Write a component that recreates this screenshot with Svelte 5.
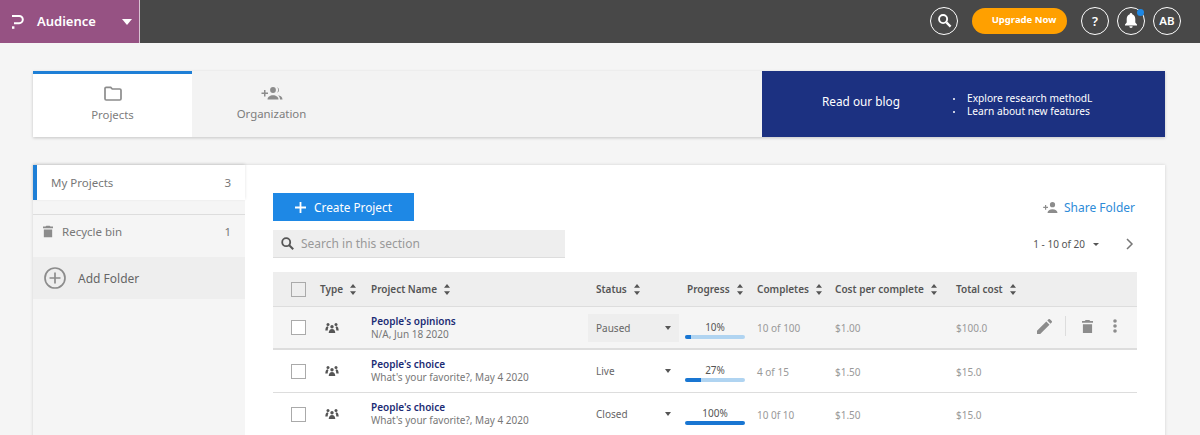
<script>
  const columns = [
    { label: 'Type' }, { label: 'Project Name' }, { label: 'Status' }, { label: 'Progress' },
    { label: 'Completes' }, { label: 'Cost per complete' }, { label: 'Total cost' }
  ];
  const rows = [
    { name: "People's opinions", sub: 'N/A, Jun 18 2020', status: 'Paused', pct: 10, completes: '10 of 100', cost: '$1.00', total: '$100.0', active: true },
    { name: "People's choice", sub: "What's your favorite?, May 4 2020", status: 'Live', pct: 27, completes: '4 of 15', cost: '$1.50', total: '$15.0' },
    { name: "People's choice", sub: "What's your favorite?, May 4 2020", status: 'Closed', pct: 100, completes: '10 0f 10', cost: '$1.50', total: '$15.0' }
  ];
</script>

{#snippet sort()}
  <svg class="sort" width="6" height="11" viewBox="0 0 6 11"><path d="M3 0 6 3.800H0zM0 7.200h6L3 11z" fill="#555"/></svg>
{/snippet}
{#snippet trash(w, h)}
  <svg width={w} height={h} viewBox="0 0 12 14"><path d="M4 0h4l1 1h3v2H0V1h3zM1 4.500h10V14H1z" fill="#8c8c8c"/></svg>
{/snippet}

<div class="page">
  <header class="top">
    <div class="brand">
      <svg width="12" height="14" viewBox="0 0 12 14"><path d="M0 1h7.200a3.500 3.500 0 0 1 0 7.200H2" fill="none" stroke="#fff" stroke-width="2"/><rect x="0" y="11.300" width="2.400" height="2.500" fill="#fff"/></svg>
      <span class="brand-name">Audience</span>
      <span class="caret"></span>
    </div>
    <div class="top-actions">
      <span class="circle search"><svg width="15" height="15" viewBox="0 0 16 16"><circle cx="6.500" cy="6.500" r="4.300" fill="none" stroke="#fff" stroke-width="2"/><path d="m10 10 4.500 4.500" stroke="#fff" stroke-width="2.400"/></svg></span>
      <span class="upgrade">Upgrade Now</span>
      <span class="circle">?</span>
      <span class="circle bell">
        <svg width="14" height="15" viewBox="0 0 14 15"><path d="M7 0a1.200 1.200 0 0 1 1.200 1.300C10.300 2 11.300 3.800 11.300 6v3.500L13 11.500V12.500H1V11.500l1.700-2V6C2.700 3.800 3.700 2 5.800 1.300A1.200 1.200 0 0 1 7 0zM5.300 13.300h3.400a1.700 1.700 0 0 1-3.400 0z" fill="#fff"/></svg>
        <i class="dot"></i>
      </span>
      <span class="circle ab">AB</span>
    </div>
  </header>

  <section class="tabs">
    <div class="tab selected">
      <svg width="18" height="15" viewBox="0 0 18 15"><path d="M1 2.500a1.200 1.200 0 0 1 1.200-1.200h4.500l1.600 1.700h7.500A1.200 1.200 0 0 1 17 4.200v8.600a1.200 1.200 0 0 1-1.200 1.200H2.200A1.200 1.200 0 0 1 1 12.800z" fill="none" stroke="#8c8c8c" stroke-width="1.700"/></svg>
      <span>Projects</span>
    </div>
    <div class="tab org">
      <svg width="22" height="13" viewBox="0 0 22 13"><g fill="#8c8c8c"><path d="M3 3h1.500v2.500H7V7H4.500v2.500H3V7H.5V5.500H3z"/><circle cx="12" cy="3" r="2.900"/><path d="M6.500 12.500c0-2.700 2.500-4.300 5.500-4.300s5.500 1.600 5.500 4.300z"/><path d="M16 .3a2.800 2.800 0 0 1 0 5.400 4 4 0 0 0 0-5.400zM17 8.300c2.500.3 4.500 1.600 4.500 4.200H19c0-1.700-.8-3.200-2-4.200z"/></g></svg>
      <span>Organization</span>
    </div>
    <div class="blog">
      <span class="blog-title">Read our blog</span>
      <ul>
        <li>Explore research methodL</li>
        <li>Learn about new features</li>
      </ul>
    </div>
  </section>

  <section class="card">
    <aside class="side">
      <div class="side-item current"><span>My Projects</span><span>3</span></div>
      <div class="side-item bin">
        <span class="bin-label">{@render trash(10, 13)}<span>Recycle bin</span></span><span>1</span>
      </div>
      <div class="add">
        <svg width="22" height="22" viewBox="0 0 22 22"><circle cx="11" cy="11" r="10" fill="none" stroke="#8c8c8c" stroke-width="1.700"/><path d="M11 5.500v11M5.500 11h11" stroke="#8c8c8c" stroke-width="1.700"/></svg>
        <span>Add Folder</span>
      </div>
    </aside>

    <div class="main">
      <div class="toolbar">
        <button class="create"><svg width="11" height="11" viewBox="0 0 11 11"><path d="M5.500 0v11M0 5.500h11" stroke="#fff" stroke-width="1.800"/></svg>Create Project</button>
        <div class="share">
          <svg width="15" height="11" viewBox="0 0 15 11"><g fill="#8c8c8c"><path d="M2 3h1.200v1.800H5V6H3.200v1.800H2V6H.2V4.800H2z"/><circle cx="9.500" cy="2.700" r="2.600"/><path d="M4.500 11c0-2.500 2.300-3.800 5-3.800s5 1.300 5 3.800z"/></g></svg>
          <span>Share Folder</span>
        </div>
      </div>
      <div class="toolbar second">
        <div class="search-box">
          <svg width="13" height="13" viewBox="0 0 13 13"><circle cx="5.200" cy="5.200" r="4" fill="none" stroke="#555" stroke-width="1.800"/><path d="m8.200 8.200 4 4" stroke="#555" stroke-width="2"/></svg>
          <span>Search in this section</span>
        </div>
        <div class="pager">
          <span>1 - 10 of 20</span><i class="mini-caret"></i>
          <svg width="8" height="12" viewBox="0 0 8 12"><path d="m1 1 5 5-5 5" fill="none" stroke="#777" stroke-width="1.500"/></svg>
        </div>
      </div>

      <div class="grid head">
        <span class="check"></span>
        {#each columns as c}
          <span class="th">{c.label}{@render sort()}</span>
        {/each}
      </div>
      {#each rows as r}
        <div class="grid row" class:active={r.active}>
          <span class="check"></span>
          <svg class="people" width="14" height="10" viewBox="0 0 14 10"><g fill="#555"><circle cx="7" cy="3.700" r="1.700"/><path d="M3.700 10C4 7.500 5 6 7 6s3 1.500 3.300 4z"/><circle cx="3" cy="1.600" r="1.500"/><path d="M.3 7.500C.5 5 1 3.500 2.500 3.200L3.500 4C3 5 2.800 6 2.700 7.500z"/><circle cx="11" cy="1.600" r="1.500"/><path d="M13.700 7.500C13.500 5 13 3.500 11.500 3.200L10.500 4C11 5 11.200 6 11.300 7.500z"/></g></svg>
          <div class="name"><strong>{r.name}</strong><small>{r.sub}</small></div>
          <div class="status"><span>{r.status}</span><i class="mini-caret wide"></i></div>
          <div class="progress">
            <span>{r.pct}%</span>
            <div class="track"><div class="fill" style="width:{r.pct}%"></div></div>
          </div>
          <span class="muted">{r.completes}</span>
          <span class="muted">{r.cost}</span>
          <span class="muted">{r.total}</span>
          {#if r.active}
            <div class="actions">
              <svg width="15" height="15" viewBox="0 0 15 15"><path d="M0 15v-3.200L9.300 2.500l3.200 3.200L3.200 15zM10.300 1.500 11.500.3a1 1 0 0 1 1.400 0l1.800 1.800a1 1 0 0 1 0 1.400l-1.200 1.200z" fill="#8c8c8c"/></svg>
              <i class="sep"></i>
              {@render trash(11, 13)}
              <svg class="kebab" width="4" height="14" viewBox="0 0 4 14"><g fill="#8c8c8c"><circle cx="2" cy="2" r="1.800"/><circle cx="2" cy="7" r="1.800"/><circle cx="2" cy="12" r="1.800"/></g></svg>
            </div>
          {/if}
        </div>
      {/each}
    </div>
  </section>
</div>

<style>
  :global(body) { margin: 0; background: #f5f5f5; overflow: hidden; }
  .page { height: 435px; overflow: hidden; font-family: "Noto Sans", "Open Sans", sans-serif; color: #555; font-size: 12px; }

  .top { height: 43px; background: #484848; display: flex; justify-content: space-between; }
  .brand { background: #965283; border-right: 1px solid #d9c3d3; display: flex; align-items: center; padding-left: 12px; box-sizing: border-box; width: 140px; color: #fff; }
  .brand-name { margin-left: 13px; font-size: 13px; font-weight: 600; width: 85px; padding-bottom: 2px; }
  .caret { border: 5px solid transparent; border-top: 6px solid #fff; border-bottom: 0; }
  .top-actions { display: flex; align-items: center; padding: 0 19px 2px 0; }
  .circle { width: 26px; height: 26px; border: 1px solid #fff; border-radius: 50%; color: #fff; display: flex; align-items: center; justify-content: center; font-size: 13px; font-weight: 600; margin-left: 8px; position: relative; }
  .ab { font-size: 11.500px; }
  .search { margin-right: 14px; }
  .upgrade { width: 95px; height: 26px; background: #ffa000; border-radius: 13px; color: #fff; font-size: 9.500px; font-weight: 700; display: flex; align-items: center; justify-content: center; padding: 0 0 3px 9px; box-sizing: border-box; margin-right: 6px; }
  .dot { position: absolute; top: 1px; right: 0; width: 7px; height: 7px; border-radius: 50%; background: #1e88e5; }

  .tabs { margin: 28px 35px 0 33px; height: 66px; background: #f3f3f3; box-shadow: 0 1px 3px rgba(0,0,0,.2); display: flex; }
  .tab { width: 159px; display: flex; flex-direction: column; align-items: center; box-sizing: border-box; font-size: 11.400px; color: #7d7d7d; }
  .tab.selected { background: #fff; border-top: 3px solid #1e7fd6; padding-top: 12px; height: 66px; gap: 6px; }
  .org { padding-top: 16px; gap: 6px; }
  .blog { margin-left: auto; width: 403px; background: #1c3181; color: #fff; display: flex; align-items: center; box-sizing: border-box; padding-left: 60px; }
  .blog-title { font-size: 11.800px; width: 125px; padding-bottom: 6px; }
  .blog ul { margin: 0; padding: 0; list-style: none; font-size: 10.200px; line-height: 13px; padding-top: 2px; }
  .blog li { position: relative; padding-left: 20px; }
  .blog li::before { content: ""; position: absolute; left: 6px; top: 6px; width: 2px; height: 2px; background: #fff; border-radius: 50%; }

  .card { margin: 28px 35px 0 33px; height: 300px; background: #fff; box-shadow: 0 0 3px rgba(0,0,0,.15); display: flex; }
  .side { width: 212px; background: #f5f5f5; flex: none; }
  .side-item { display: flex; justify-content: space-between; padding: 0 14px 0 18px; align-items: center; color: #777; font-size: 11.500px; }
  .current { height: 35px; background: #fff; border-left: 4px solid #1e7fd6; box-sizing: border-box; padding-left: 14px; box-shadow: 0 -1px 3px rgba(0,0,0,.12); }
  .bin { margin-top: 14px; height: 43px; box-sizing: border-box; border-top: 1px solid #ddd; padding: 0 14px 10px 10px; }
  .bin-label { display: flex; align-items: center; gap: 9px; }
  .add { height: 42px; background: #eee; display: flex; align-items: center; gap: 12px; padding-left: 11px; color: #666; }

  .main { flex: 1; padding: 28px 28px 0; min-width: 0; }
  .toolbar { display: flex; justify-content: space-between; align-items: center; }
  .toolbar.second { margin-top: 9px; margin-bottom: 14px; }
  .create { width: 141px; height: 28px; border: 0; background: #1e88e5; color: #fff; font: inherit; font-size: 11.800px; display: flex; align-items: center; justify-content: center; gap: 8px; padding: 0; }
  .share { display: flex; align-items: center; gap: 6px; color: #2e8bd8; font-size: 12px; padding-right: 2px; }
  .search-box { width: 292px; height: 28px; background: #eee; border-bottom: 1px solid #ddd; box-sizing: border-box; display: flex; align-items: center; gap: 7px; padding-left: 8px; color: #999; font-size: 12px; }
  .pager { display: flex; align-items: center; font-size: 10px; color: #555; padding-right: 3px; }
  .mini-caret { border: 3px solid transparent; border-top: 3.500px solid #555; border-bottom: 0; margin-left: 8px; margin-right: 27px; }

  .grid { display: grid; grid-template-columns: 47px 51px 225px 91px 70px 78px 121px 1fr; align-items: center; position: relative; }
  .head { height: 35px; background: #eee; border-bottom: 1px solid #ddd; box-sizing: border-box; }
  .th { font-size: 10px; font-weight: 600; color: #555; display: flex; align-items: center; gap: 7px; white-space: nowrap; }
  .row { height: 43px; border-bottom: 1px solid #ddd; box-sizing: border-box; }
  .row.active { background: #f5f5f5; border-bottom: 2px solid #ddd; }
  .check { width: 13px; height: 13px; border: 1px solid #aaa; background: #fff; margin-left: 18px; }
  .head .check { background: transparent; }
  .people { margin-left: 5px; }
  .name { display: flex; flex-direction: column; line-height: 13px; }
  .active .name { margin-top: 1px; }
  .name strong { font-size: 10px; font-weight: 600; color: #1c2c74; }
  .name small { font-size: 10px; color: #777; white-space: nowrap; }
  .status { display: flex; align-items: center; justify-content: space-between; font-size: 10px; color: #666; height: 28px; margin-left: -8px; padding-left: 8px; width: 91px; box-sizing: border-box; padding-right: 8px; }
  .active .status { background: #eee; }
  .status .mini-caret { margin: 0; border-width: 3.500px; border-top-width: 4px; border-bottom: 0; }
  .progress { width: 60px; margin-left: -2px; text-align: center; font-size: 10px; line-height: 13px; margin-top: 4px; }
  .track { height: 4px; margin-top: 1px; background: #b0d4f1; border-radius: 2px; overflow: hidden; }
  .fill { height: 100%; background: #1976d2; }
  .muted { color: #999; font-size: 10px; white-space: nowrap; margin-top: 1px; }
  .actions { position: absolute; right: 20px; top: 9px; display: flex; align-items: center; }
  .sep { width: 1px; height: 20px; background: #ddd; margin: 0 16px 0 13px; }
  .kebab { margin-left: 20px; }
</style>
